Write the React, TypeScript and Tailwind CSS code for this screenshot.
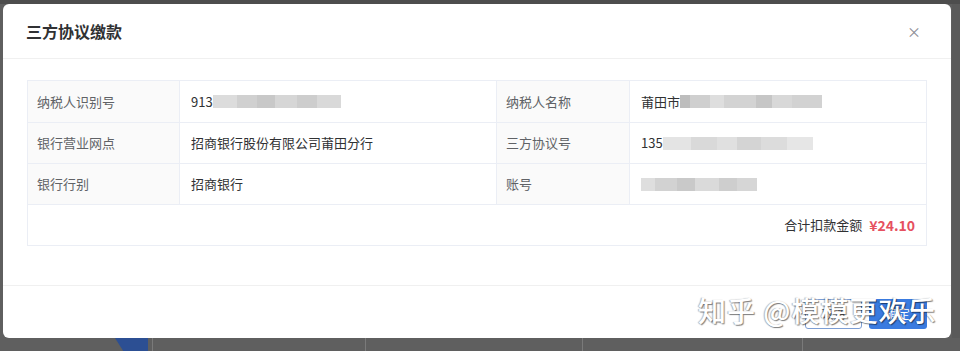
import React from "react";

const font = { fontFamily: '"Noto Sans CJK SC", "Noto Sans", sans-serif' };

// 打码块（模糊的敏感信息）
function Masked({ blocks }: { blocks: [number, string][] }) {
  return (
    <span className="inline-flex h-[13px] items-center align-middle blur-[0.6px]">
      {blocks.map(([w, c], i) => (
        <span key={i} className="h-[13px]" style={{ width: w, background: c }} />
      ))}
    </span>
  );
}

const labelCls =
  "bg-[#fafafa] border-r border-[#ebeef5] pl-[9px] text-[#606266] flex items-center";
const valueCls = "pl-[11px] text-[#303133] flex items-center";

export default function App() {
  return (
    <div className="relative h-[351px] w-[960px] overflow-hidden bg-[#5f5f5f]" style={font}>
      <div className="h-[4px] bg-[#4d4d4d]" />
      <div className="flex">
        <div className="w-[3px]" />
        {/* 弹窗 */}
        <div className="flex h-[334px] w-[948px] flex-col rounded-[6px] bg-white">
          <div className="flex h-[55px] items-center justify-between border-b border-[#f0f0f0] pl-[23px] pr-[30px]">
            <span className="text-[16px] font-bold text-[#303133]">三方协议缴款</span>
            <span className="text-[14px] leading-none text-[#8a8d93]">×</span>
          </div>

          <div className="flex-1 px-6 pt-[21px]">
            <div className="border border-[#ebeef5] text-[13px]">
              <div className="grid h-[42px] grid-cols-[152px_317px_133px_1fr] border-b border-[#ebeef5]">
                <div className={labelCls}>纳税人识别号</div>
                <div className={valueCls + " border-r border-[#ebeef5]"}>
                  <span>913</span>
                  <Masked
                    blocks={[
                      [24, "#dcdcdc"],
                      [20, "#d0d0d0"],
                      [18, "#c8c8c8"],
                      [22, "#d6d6d6"],
                      [20, "#cdcdcd"],
                      [24, "#d9d9d9"],
                    ]}
                  />
                </div>
                <div className={labelCls}>纳税人名称</div>
                <div className={valueCls}>
                  <span>莆田市</span>
                  <Masked
                    blocks={[
                      [10, "#bdbdbd"],
                      [20, "#cfcfcf"],
                      [14, "#dedede"],
                      [32, "#d3d3d3"],
                      [16, "#c6c6c6"],
                      [20, "#d8d8d8"],
                      [30, "#d2d2d2"],
                    ]}
                  />
                </div>
              </div>
              <div className="grid h-[41px] grid-cols-[152px_317px_133px_1fr] border-b border-[#ebeef5]">
                <div className={labelCls}>银行营业网点</div>
                <div className={valueCls + " border-r border-[#ebeef5]"}>招商银行股份有限公司莆田分行</div>
                <div className={labelCls}>三方协议号</div>
                <div className={valueCls}>
                  <span>135</span>
                  <Masked
                    blocks={[
                      [28, "#e4e4e4"],
                      [26, "#d9d9d9"],
                      [20, "#e0e0e0"],
                      [24, "#d4d4d4"],
                      [26, "#dcdcdc"],
                      [26, "#e6e6e6"],
                    ]}
                  />
                </div>
              </div>
              <div className="grid h-[41px] grid-cols-[152px_317px_133px_1fr] border-b border-[#ebeef5]">
                <div className={labelCls}>银行行别</div>
                <div className={valueCls + " border-r border-[#ebeef5]"}>招商银行</div>
                <div className={labelCls}>账号</div>
                <div className={valueCls}>
                  <Masked
                    blocks={[
                      [14, "#dedede"],
                      [22, "#d2d2d2"],
                      [18, "#c9c9c9"],
                      [24, "#dadada"],
                      [18, "#cecece"],
                      [20, "#d6d6d6"],
                    ]}
                  />
                </div>
              </div>
              <div className="flex h-[40px] items-center justify-end pr-[11px]">
                <span className="text-[#303133]">合计扣款金额</span>
                <span className="ml-[7px] text-[14px] font-bold text-[#e6505f]">¥24.10</span>
              </div>
            </div>
          </div>

          <div className="flex h-[53px] items-center justify-end gap-[7px] border-t border-[#f0f0f0] px-6 pt-[3px]">
            <button className="h-[30px] w-[57px] rounded-[3px] border border-[#7c9ed4] bg-white text-[12px] text-[#606266]">
              取消
            </button>
            <button className="h-[30px] w-[58px] rounded-[3px] bg-[#3a7be0] text-[12px] text-white">
              确定
            </button>
          </div>
        </div>
        <div className="ml-[1px] flex-1 bg-[#5a5a5a]" />
      </div>

      {/* 底部被遮罩的页面内容 */}
      <div className="relative flex h-[13px]">
        <div className="w-[115px]" />
        <div className="w-[33px] bg-[#2c4f93] [clip-path:polygon(0_0,100%_0,100%_100%,25%_100%)]" />
        <div className="ml-[4px] w-[1px] bg-[#7a7a7a]" />
        <div className="ml-[212px] w-[1px] bg-[#7a7a7a]" />
        <div className="ml-[216px] w-[1px] bg-[#7a7a7a]" />
        <div className="ml-[219px] w-[1px] bg-[#7a7a7a]" />
      </div>

      {/* 水印 */}
      <div className="pointer-events-none absolute left-[698px] top-[296px] text-[28px] font-medium leading-none tracking-[1px] text-white [text-shadow:1px_1px_1px_rgba(0,0,0,0.5),-1px_0_1px_rgba(0,0,0,0.3)]">
        知乎 @模模更欢乐
      </div>
    </div>
  );
}
